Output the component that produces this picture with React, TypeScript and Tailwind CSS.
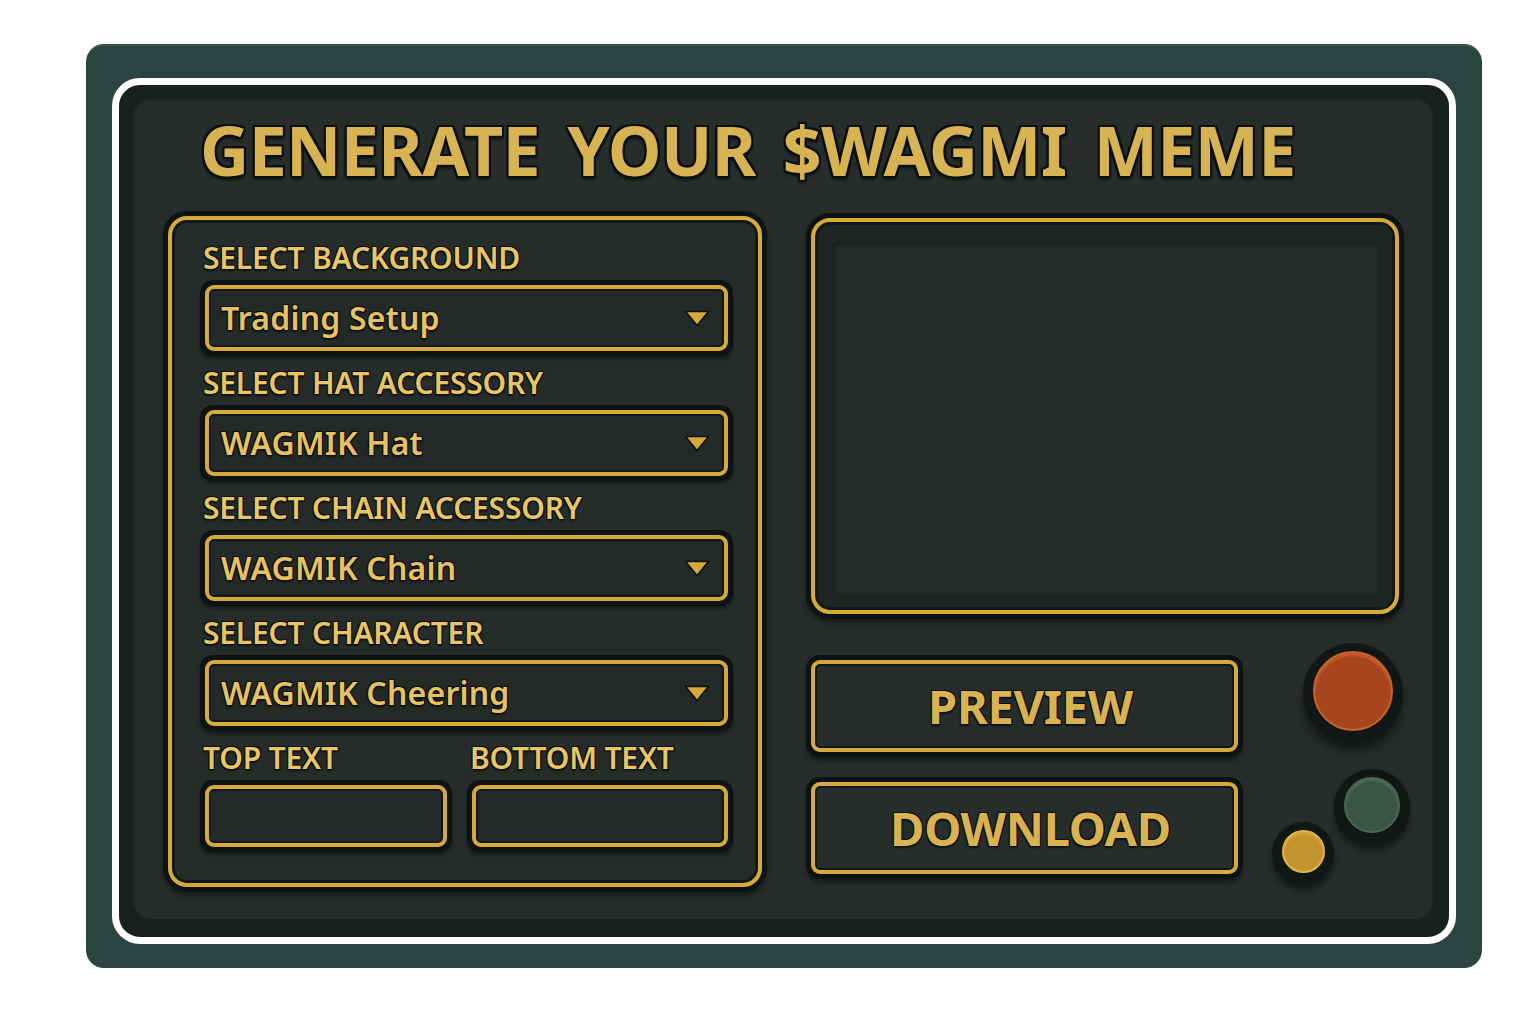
import React from 'react';

const FIELDS = [
  { label: 'SELECT BACKGROUND', value: 'Trading Setup' },
  { label: 'SELECT HAT ACCESSORY', value: 'WAGMIK Hat' },
  { label: 'SELECT CHAIN ACCESSORY', value: 'WAGMIK Chain' },
  { label: 'SELECT CHARACTER', value: 'WAGMIK Cheering' },
];

const outline =
  '[text-shadow:-1px_-1px_0_#0b0f0e,1px_-1px_0_#0b0f0e,-1px_1px_0_#0b0f0e,1px_1px_0_#0b0f0e,0_2px_2px_rgba(0,0,0,0.55)]';

function Caret() {
  return (
    <svg width="26" height="17" viewBox="0 0 26 17" className="shrink-0">
      <polygon points="1.5,1.5 24.5,1.5 13,15.5" fill="#d4a93c" stroke="#0c100f" strokeWidth="1.5" strokeLinejoin="round" />
    </svg>
  );
}

function Label({ children }: { children: React.ReactNode }) {
  return (
    <div className={`h-[36px] pl-[3px] text-[30px] font-semibold leading-[38px] tracking-[-0.2px] text-[#e8c565] ${outline}`}>
      {children}
    </div>
  );
}

function SelectBox({ value }: { value: string }) {
  return (
    <div className="h-[76px] rounded-[13px] bg-[#0e1311] p-[5px] shadow-[0_3px_3px_rgba(0,0,0,0.35)]">
      <div className="flex h-full items-center justify-between rounded-[9px] border-[4px] border-[#d4aa3e] bg-[#232a28] pl-[12px] pr-[14px] shadow-[inset_0_0_0_2px_#121715]">
        <span className={`text-[32px] font-semibold leading-none tracking-[0.2px] text-[#e6c263] ${outline}`}>{value}</span>
        <Caret />
      </div>
    </div>
  );
}

function InputBox() {
  return (
    <div className="h-[72px] rounded-[13px] bg-[#0e1311] p-[5px] shadow-[0_3px_3px_rgba(0,0,0,0.35)]">
      <div className="h-full rounded-[9px] border-[4px] border-[#d4aa3e] bg-[#232a28] shadow-[inset_0_0_0_2px_#121715]" />
    </div>
  );
}

function BigButton({ children }: { children: React.ReactNode }) {
  return (
    <div className="h-[102px] rounded-[14px] bg-[#0e1311] p-[5px] shadow-[0_4px_4px_rgba(0,0,0,0.35)]">
      <div className="flex h-full items-center justify-center rounded-[9px] border-[4px] border-[#d4aa3e] bg-[#262d2b] pl-[12px] shadow-[inset_0_0_0_2px_#121715]">
        <span className={`text-[47px] font-bold leading-none tracking-[-0.3px] text-[#d9b352] ${outline}`}>{children}</span>
      </div>
    </div>
  );
}

export default function App() {
  return (
    <div className="min-h-screen bg-white pl-[86px] pt-[44px]" style={{ fontFamily: '"Noto Sans", "Open Sans", sans-serif' }}>
      <div className="h-[924px] w-[1396px] rounded-[18px] bg-[#2b4440] px-[26px] pb-[24px] pt-[34px] shadow-[inset_0_2px_0_rgba(255,255,255,0.06)]">
        <div className="h-full rounded-[28px] border-[7px] border-white bg-[#19211f] pb-[18px] pl-[14px] pr-[16px] pt-[12px]">
          <div className="h-full rounded-[18px] bg-[#262d2b] pt-[13px] shadow-[inset_0_2px_3px_rgba(0,0,0,0.35)]">
            <h1
              className={`h-[80px] pl-[67px] text-[68px] font-bold leading-[80px] tracking-[-0.6px] text-[#d8b354] [word-spacing:10px] [text-shadow:-2px_-2px_0_#0b0f0e,2px_-2px_0_#0b0f0e,-2px_2px_0_#0b0f0e,2px_2px_0_#0b0f0e,0_-2px_0_#0b0f0e,0_2px_0_#0b0f0e,-2px_0_0_#0b0f0e,2px_0_0_#0b0f0e,0_4px_3px_rgba(0,0,0,0.5)]`}
            >
              GENERATE YOUR $WAGMI MEME
            </h1>

            <div className="mt-[21px] flex pl-[30px]">
              {/* left form panel */}
              <div className="h-[681px] w-[604px] shrink-0 rounded-[24px] bg-[#0e1311] p-[5px] shadow-[0_4px_5px_rgba(0,0,0,0.35)]">
                <div className="h-full rounded-[19px] border-[4px] border-[#d4aa3e] bg-[#252c2a] pb-[31px] pl-[28px] pr-[25px] pt-[19px] shadow-[inset_0_0_0_3px_#131816]">
                  {FIELDS.map((f) => (
                    <div key={f.label} className="mb-[8px]">
                      <div className="mb-[5px]">
                        <Label>{f.label}</Label>
                      </div>
                      <SelectBox value={f.value} />
                    </div>
                  ))}
                  <div className="grid grid-cols-[252px_1fr] gap-x-[15px]">
                    <div className="mb-[5px]">
                      <Label>TOP TEXT</Label>
                    </div>
                    <div className="mb-[5px]">
                      <Label>BOTTOM TEXT</Label>
                    </div>
                    <InputBox />
                    <InputBox />
                  </div>
                </div>
              </div>

              {/* right column */}
              <div className="ml-[39px] w-[598px] shrink-0">
                <div className="mt-[2px] h-[406px] rounded-[24px] bg-[#0e1311] p-[5px] shadow-[0_4px_5px_rgba(0,0,0,0.35)]">
                  <div className="h-full rounded-[19px] border-[4px] border-[#d4aa3e] bg-[#1e2624] px-[17px] pb-[16px] pt-[20px] shadow-[inset_0_0_0_3px_#131816]">
                    <div className="h-full rounded-[6px] bg-[#262d2b] shadow-[inset_3px_3px_4px_rgba(0,0,0,0.3)]" />
                  </div>
                </div>

                <div className="mt-[36px] flex">
                  <div className="flex w-[437px] shrink-0 flex-col gap-[20px]">
                    <BigButton>PREVIEW</BigButton>
                    <BigButton>DOWNLOAD</BigButton>
                  </div>

                  {/* knobs */}
                  <div className="flex shrink-0 flex-col">
                    <div className="-mt-[12px] ml-[60px] flex h-[100px] w-[100px] items-center justify-center rounded-full bg-[#111715] shadow-[0_8px_8px_rgba(0,0,0,0.45)]">
                      <div className="-mt-[4px] h-[80px] w-[80px] rounded-full border-[2px] border-[#c9632b] bg-[#a7451e] shadow-[inset_0_3px_2px_rgba(255,150,80,0.3)]" />
                    </div>
                    <div className="mt-[26px] flex items-start">
                      <div className="ml-[29px] mt-[53px] flex h-[62px] w-[62px] items-center justify-center rounded-full bg-[#111715] shadow-[0_6px_6px_rgba(0,0,0,0.45)]">
                        <div className="-mt-[3px] h-[43px] w-[43px] rounded-full border-[2px] border-[#e0b342] bg-[#c3942e] shadow-[inset_0_2px_2px_rgba(255,220,120,0.3)]" />
                      </div>
                      <div className="flex h-[76px] w-[76px] items-center justify-center rounded-full bg-[#111715] shadow-[0_6px_6px_rgba(0,0,0,0.45)]">
                        <div className="-mt-[4px] h-[56px] w-[56px] rounded-full border-[2px] border-[#4a6656] bg-[#3a5446] shadow-[inset_0_2px_2px_rgba(160,220,190,0.2)]" />
                      </div>
                    </div>
                  </div>
                </div>
              </div>
            </div>
          </div>
        </div>
      </div>
    </div>
  );
}
